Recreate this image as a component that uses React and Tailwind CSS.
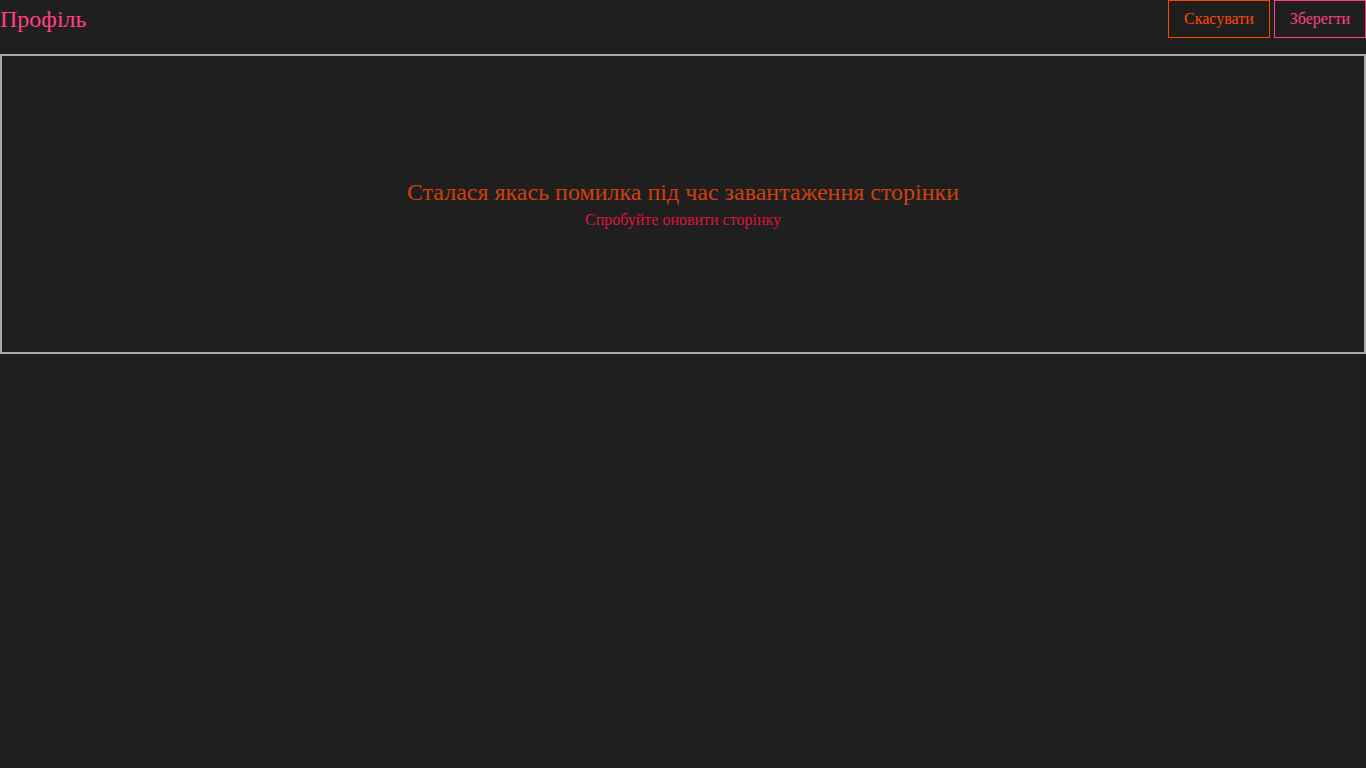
export default function App() {
  return (
    <div className="min-h-screen w-full bg-[#1f1f1f]" style={{ fontFamily: '"Liberation Serif", serif' }}>
      <div className="flex items-start justify-between">
        <h1 className="text-[24px] leading-[38px] text-[#ff4081] font-normal">Профіль</h1>
        <div className="flex gap-1">
          <button className="h-[38px] px-[15px] border border-[#ff4500] text-[#ff4500] text-[16px]">Скасувати</button>
          <button className="h-[38px] px-[15px] border border-[#ff4081] text-[#ff4081] text-[16px]">Зберегти</button>
        </div>
      </div>
      <div className="mt-4 h-[300px] border-2 border-[#a9a9a9] flex flex-col items-center justify-center pb-[2px]">
        <div className="text-[24px] text-[#d0400c]">Сталася якась помилка під час завантаження сторінки</div>
        <div className="-mt-[2px] text-[16px] text-[#dc143c]">Спробуйте оновити сторінку</div>
      </div>
    </div>
  );
}
